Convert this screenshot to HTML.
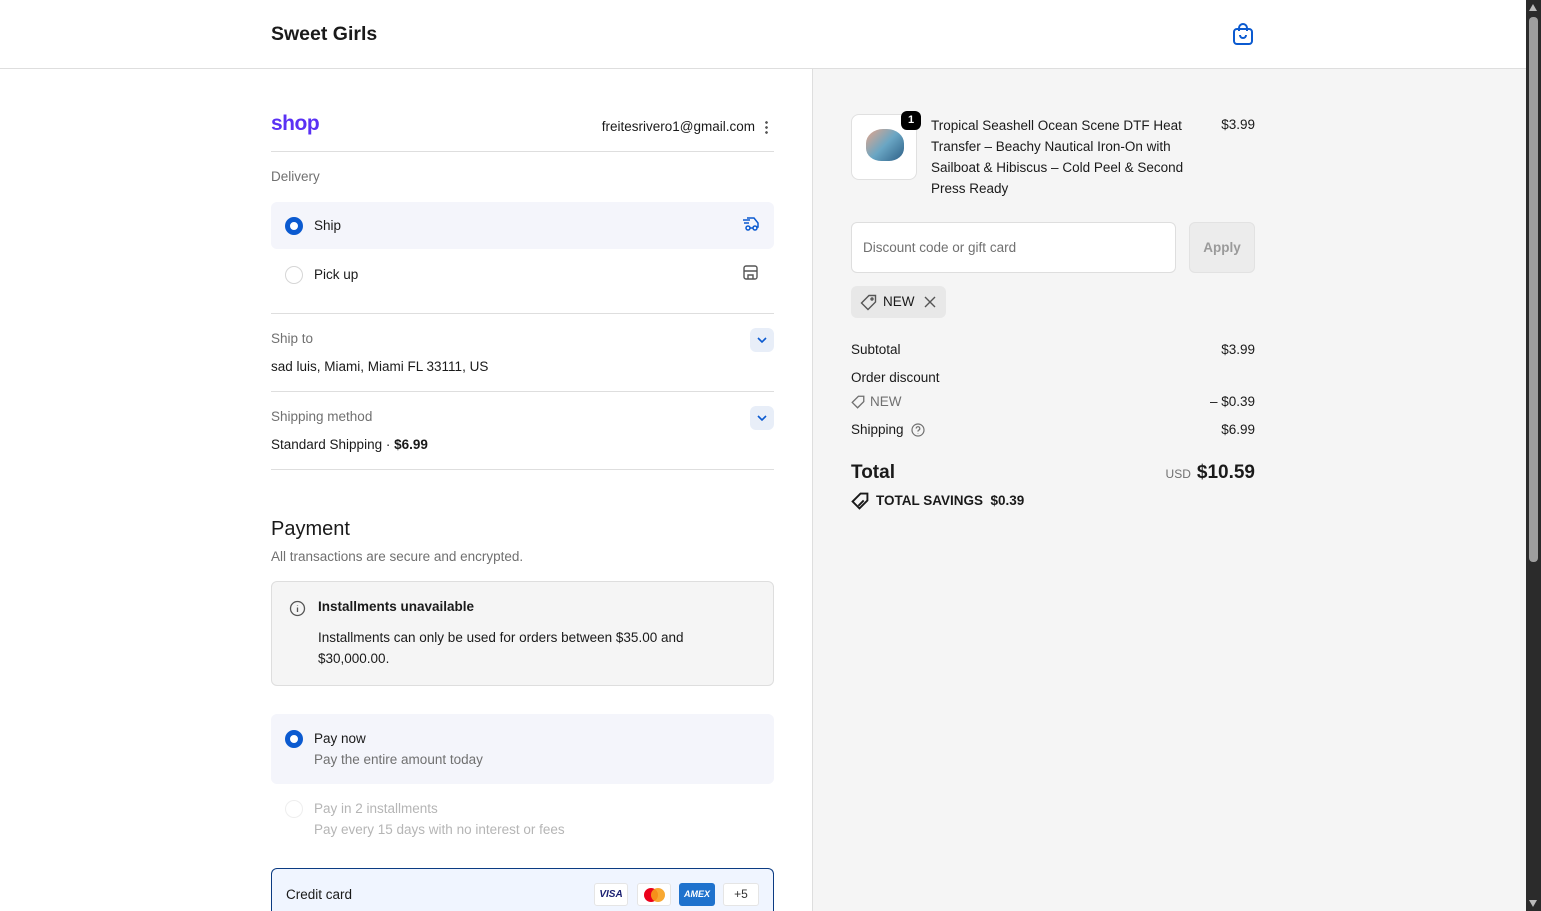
<!DOCTYPE html>
<html style="width:1541px;height:911px;overflow:hidden"><head><meta charset="utf-8"><style>
*{box-sizing:border-box;margin:0;padding:0}
body{width:1541px;height:911px;overflow:hidden;font-family:"Liberation Sans",sans-serif;font-size:13.5px;color:#1a1a1a;background:#fff;position:relative}
.abs{position:absolute}
.r{position:absolute;right:286px}
.hdr{left:0;top:0;width:1526px;height:69px;border-bottom:1px solid #dedede;background:#fff}
.right{left:812px;top:69px;width:714px;height:842px;background:#f5f5f5;border-left:1px solid #dedede}
.sb{left:1526px;top:0;width:15px;height:911px;background:#2b2b2b}
.thumb{left:1529px;top:17px;width:9px;height:545px;background:#9e9e9e;border-radius:4px}
.hr{height:1px;background:#dedede;left:271px;width:503px}
.grey{color:#707070}
.radio{width:18px;height:18px;border-radius:50%;border:1px solid #d6d6d6;background:#fff}
.radio.on{border:5px solid #0b5ad0;background:#fff}
.chev{width:24px;height:24px;border-radius:6px;background:#e8eef8;display:flex;align-items:center;justify-content:center}
</style></head><body>
<div class="abs hdr"></div>
<div class="abs" style="left:271px;top:23px;font-size:19.5px;font-weight:bold">Sweet Girls</div>
<svg class="abs" style="left:1232px;top:23px" width="22" height="23" viewBox="0 0 22 23" fill="none" stroke="#0b5ad0" stroke-width="2"><rect x="2" y="6" width="18" height="15" rx="3"/><path d="M7 8V5a4 4 0 0 1 8 0v3"/><path d="M8 12a3 3 0 0 0 6 0"/></svg>

<div class="abs right"></div>
<div class="abs sb"></div><div class="abs thumb"></div>
<div class="abs" style="left:1529px;top:4px;width:0;height:0;border-left:4.5px solid transparent;border-right:4.5px solid transparent;border-bottom:7px solid #bbb"></div>
<div class="abs" style="left:1529px;top:900px;width:0;height:0;border-left:4.5px solid transparent;border-right:4.5px solid transparent;border-top:7px solid #bbb"></div>

<div class="abs" style="left:271px;top:112px;font-size:21px;font-weight:bold;color:#5a31f4;letter-spacing:-0.5px">shop</div>
<div class="abs" style="right:786px;top:119px">freitesrivero1@gmail.com</div>
<div class="abs" style="left:765px;top:120px;width:3px;height:14px;background:radial-gradient(circle,#555 1.2px,transparent 1.5px) 0 0/3px 5px"></div>
<div class="abs hr" style="top:151px"></div>
<div class="abs grey" style="left:271px;top:169px">Delivery</div>
<div class="abs" style="left:271px;top:202px;width:503px;height:47px;background:#f4f5fb;border-radius:6px"></div>
<div class="abs radio on" style="left:285px;top:217px"></div>
<div class="abs" style="left:314px;top:218px">Ship</div>
<svg class="abs" style="left:742px;top:216px" width="18" height="16" viewBox="0 0 18 16" fill="none" stroke="#0b5ad0" stroke-width="1.5"><path d="M1 4h7M2 7h5M5 2h7l4 5v4h-2"/><circle cx="6" cy="12" r="2"/><circle cx="13" cy="12" r="2"/><path d="M8 12h3"/></svg>
<div class="abs radio" style="left:285px;top:266px"></div>
<div class="abs" style="left:314px;top:267px">Pick up</div>
<svg class="abs" style="left:743px;top:265px" width="15" height="15" viewBox="0 0 15 15" fill="none" stroke="#555" stroke-width="1.4"><rect x="1" y="1" width="13" height="13" rx="2"/><path d="M1 6h13M5 14v-4h5v4"/></svg>
<div class="abs hr" style="top:313px"></div>
<div class="abs grey" style="left:271px;top:331px">Ship to</div>
<div class="abs chev" style="left:750px;top:328px"><svg width="10" height="6" viewBox="0 0 10 6" fill="none" stroke="#0b5ad0" stroke-width="1.6"><path d="M1 1l4 4 4-4"/></svg></div>
<div class="abs" style="left:271px;top:359px">sad luis, Miami, Miami FL 33111, US</div>
<div class="abs hr" style="top:391px"></div>
<div class="abs grey" style="left:271px;top:409px">Shipping method</div>
<div class="abs chev" style="left:750px;top:406px"><svg width="10" height="6" viewBox="0 0 10 6" fill="none" stroke="#0b5ad0" stroke-width="1.6"><path d="M1 1l4 4 4-4"/></svg></div>
<div class="abs" style="left:271px;top:437px">Standard Shipping · <b>$6.99</b></div>
<div class="abs hr" style="top:469px"></div>

<div class="abs" style="left:271px;top:518px;font-size:20px">Payment</div>
<div class="abs grey" style="left:271px;top:549px">All transactions are secure and encrypted.</div>
<div class="abs" style="left:271px;top:581px;width:503px;height:105px;background:#f5f5f5;border:1px solid #dedede;border-radius:6px"></div>
<svg class="abs" style="left:289px;top:600px" width="17" height="17" viewBox="0 0 17 17" fill="none" stroke="#555" stroke-width="1.3"><circle cx="8.5" cy="8.5" r="7"/><path d="M8.5 7.5v4.5M8.5 5v.5"/></svg>
<div class="abs" style="left:318px;top:599px;font-weight:bold">Installments unavailable</div>
<div class="abs" style="left:318px;top:627px;line-height:21px;width:420px">Installments can only be used for orders between $35.00 and $30,000.00.</div>
<div class="abs" style="left:271px;top:714px;width:503px;height:70px;background:#f4f5fb;border-radius:6px"></div>
<div class="abs radio on" style="left:285px;top:730px"></div>
<div class="abs" style="left:314px;top:731px">Pay now</div>
<div class="abs grey" style="left:314px;top:752px">Pay the entire amount today</div>
<div class="abs radio" style="left:285px;top:800px;border-color:#eee"></div>
<div class="abs" style="left:314px;top:801px;color:#b5b5b5">Pay in 2 installments</div>
<div class="abs" style="left:314px;top:822px;color:#b5b5b5">Pay every 15 days with no interest or fees</div>
<div class="abs" style="left:271px;top:868px;width:503px;height:43px;background:#f0f5ff;border:1px solid #0b3b82;border-bottom:none;border-radius:6px 6px 0 0"></div>
<div class="abs" style="left:286px;top:887px">Credit card</div>
<div class="abs" style="left:594px;top:883px;width:34px;height:23px;background:#fff;border:1px solid #e5e5e5;border-radius:3px;font-size:10px;font-weight:bold;font-style:italic;color:#1a1f71;text-align:center;line-height:21px">VISA</div>
<div class="abs" style="left:637px;top:883px;width:34px;height:23px;background:#fff;border:1px solid #e5e5e5;border-radius:3px"><div class="abs" style="left:6px;top:4px;width:14px;height:14px;border-radius:50%;background:#eb001b"></div><div class="abs" style="left:13px;top:4px;width:14px;height:14px;border-radius:50%;background:#f79e1b;opacity:.9"></div></div>
<div class="abs" style="left:679px;top:883px;width:36px;height:23px;background:#1f72cd;border-radius:3px;font-size:9px;font-weight:bold;font-style:italic;color:#fff;text-align:center;line-height:23px">AMEX</div>
<div class="abs" style="left:723px;top:883px;width:36px;height:23px;background:#fff;border:1px solid #e5e5e5;border-radius:3px;font-size:12px;color:#333;text-align:center;line-height:21px">+5</div>

<div class="abs" style="left:851px;top:114px;width:66px;height:66px;background:#fff;border:1px solid #e0e0e0;border-radius:8px;overflow:hidden"><div class="abs" style="left:14px;top:14px;width:38px;height:32px;border-radius:45% 45% 40% 40%;background:linear-gradient(135deg,#e6a58a,#6aa6c4 50%,#2d5f86)"></div></div>
<div class="abs" style="left:901px;top:111px;width:20px;height:19px;background:#000;color:#fff;border-radius:6px;font-size:11px;font-weight:bold;text-align:center;line-height:19px">1</div>
<div class="abs" style="left:931px;top:115px;width:265px;line-height:21px">Tropical Seashell Ocean Scene DTF Heat Transfer – Beachy Nautical Iron-On with Sailboat &amp; Hibiscus – Cold Peel &amp; Second Press Ready</div>
<div class="r" style="top:117px">$3.99</div>
<div class="abs" style="left:851px;top:222px;width:325px;height:51px;background:#fff;border:1px solid #dedede;border-radius:6px"></div>
<div class="abs grey" style="left:863px;top:240px">Discount code or gift card</div>
<div class="abs" style="left:1189px;top:222px;width:66px;height:51px;background:#ececec;border:1px solid #e2e2e2;border-radius:6px;color:#9a9a9a;font-weight:bold;text-align:center;line-height:49px">Apply</div>
<div class="abs" style="left:851px;top:286px;width:95px;height:32px;background:#e8e8e8;border-radius:6px"></div>
<svg class="abs" style="left:860px;top:294px" width="17" height="17" viewBox="0 0 17 17" fill="none" stroke="#555" stroke-width="1.4"><path d="M9 1.5h6.5V8L8 15.5 1.5 9z"/><circle cx="12" cy="5" r="1"/></svg>
<div class="abs" style="left:883px;top:294px">NEW</div>
<svg class="abs" style="left:924px;top:296px" width="12" height="12" viewBox="0 0 12 12" stroke="#555" stroke-width="1.4"><path d="M1 1l10 10M11 1L1 11"/></svg>

<div class="abs" style="left:851px;top:342px">Subtotal</div><div class="r" style="top:342px">$3.99</div>
<div class="abs" style="left:851px;top:370px">Order discount</div>
<svg class="abs" style="left:851px;top:395px" width="14" height="14" viewBox="0 0 17 17" fill="none" stroke="#707070" stroke-width="1.6"><path d="M9 1.5h6.5V8L8 15.5 1.5 9z"/></svg>
<div class="abs grey" style="left:870px;top:394px">NEW</div><div class="r" style="top:394px">– $0.39</div>
<div class="abs" style="left:851px;top:422px">Shipping</div>
<svg class="abs" style="left:911px;top:423px" width="14" height="14" viewBox="0 0 14 14" fill="none" stroke="#707070" stroke-width="1.2"><circle cx="7" cy="7" r="6"/><path d="M5.2 5.5a1.8 1.8 0 1 1 2.4 1.7c-.5.2-.6.5-.6 1v.4M7 10.3v.3"/></svg>
<div class="r" style="top:422px">$6.99</div>
<div class="abs" style="left:851px;top:462px;font-size:19px;font-weight:bold">Total</div>
<div class="r" style="top:462px;font-size:19px;font-weight:bold"><span style="font-size:12px;font-weight:normal;color:#707070;margin-right:6px">USD</span>$10.59</div>
<svg class="abs" style="left:851px;top:492px" width="18" height="18" viewBox="0 0 17 17" fill="none" stroke="#1a1a1a" stroke-width="1.8"><path d="M9 1.5h6.5V8L8 15.5 1.5 9z"/><path d="M12 8l-5 5"/></svg>
<div class="abs" style="left:876px;top:493px;font-weight:bold">TOTAL SAVINGS &nbsp;$0.39</div>
</body></html>
